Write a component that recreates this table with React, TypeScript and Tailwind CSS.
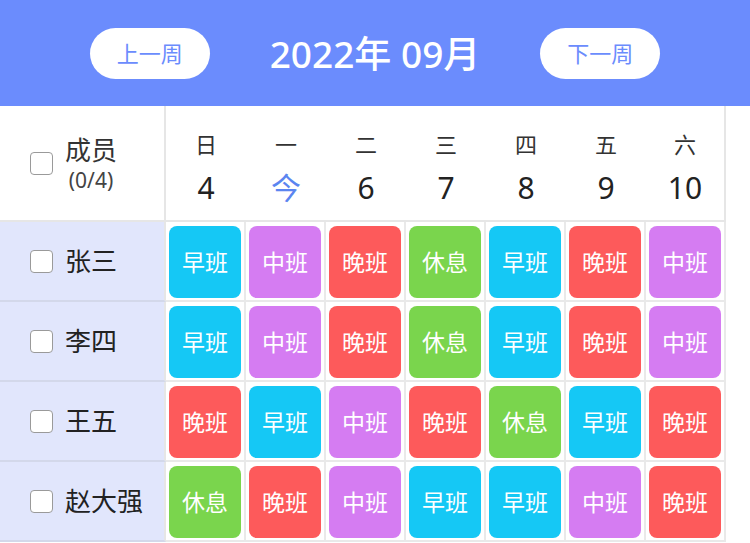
import React from "react";

const COLORS: Record<string, string> = {
  早班: "bg-[#15c8f5]",
  中班: "bg-[#d57cf2]",
  晚班: "bg-[#fd5a5b]",
  休息: "bg-[#7ad54d]",
};

const days = [
  { w: "日", d: "4" },
  { w: "一", d: "今", today: true },
  { w: "二", d: "6" },
  { w: "三", d: "7" },
  { w: "四", d: "8" },
  { w: "五", d: "9" },
  { w: "六", d: "10" },
];

const rows = [
  { name: "张三", shifts: ["早班", "中班", "晚班", "休息", "早班", "晚班", "中班"] },
  { name: "李四", shifts: ["早班", "中班", "晚班", "休息", "早班", "晚班", "中班"] },
  { name: "王五", shifts: ["晚班", "早班", "中班", "晚班", "休息", "早班", "晚班"] },
  { name: "赵大强", shifts: ["休息", "晚班", "中班", "早班", "早班", "中班", "晚班"] },
];

function Box() {
  return <span className="block w-[23px] h-[23px] rounded-[4px] border-[1.5px] border-[#9a9a9a] bg-white shrink-0" />;
}

export default function App() {
  const font = { fontFamily: '"Noto Sans", "Noto Sans CJK SC", sans-serif' };
  return (
    <div className="w-[750px] h-[543px] overflow-hidden bg-white" style={font}>
      <div className="h-[106px] bg-[#6b8cfd] flex items-center justify-center gap-[60px]">
        <button className="w-[120px] h-[51px] rounded-full bg-white text-[#6b8cfd] text-[22px] leading-none">上一周</button>
        <div className="text-white text-[37px] leading-none whitespace-pre font-medium">2022年 09月</div>
        <button className="w-[120px] h-[51px] rounded-full bg-white text-[#6b8cfd] text-[22px] leading-none">下一周</button>
      </div>
      <div className="grid grid-cols-[166px_repeat(7,80px)] w-[726px]">
        <div className="h-[116px] border-r-2 border-b-2 border-[#e6e6e6] flex items-center pl-[30px] gap-[12px]">
          <Box />
          <div className="flex flex-col items-center text-[#333] gap-[2px] pt-[2px]">
            <span className="text-[26px] leading-[30px]">成员</span>
            <span className="text-[21px] leading-[26px] text-[#444]">(0/4)</span>
          </div>
        </div>
        {days.map((d, i) => (
          <div key={i} className={`h-[116px] border-b-2 border-[#e6e6e6] ${i === 6 ? "border-r-2" : ""} flex flex-col items-center pt-[24px]`}>
            <span className="text-[22px] leading-[28px] text-[#333]">{d.w}</span>
            <span className={`mt-[14px] text-[30px] leading-[32px] ${d.today ? "text-[#5b85f0]" : "text-[#222]"}`}>{d.d}</span>
          </div>
        ))}
        {rows.map((r) => (
          <React.Fragment key={r.name}>
            <div className="h-[80px] bg-[#e1e6fc] border-r-2 border-r-[#e6e6e6] border-b-2 border-b-[#d3d8ea] flex items-center pl-[30px] gap-[12px]">
              <Box />
              <span className="text-[26px] text-[#222]">{r.name}</span>
            </div>
            {r.shifts.map((s, j) => (
              <div key={j} className="h-[80px] border-b-2 border-r-2 border-[#e9e9e9] p-[3px] pt-[4px]">
                <div className={`w-full h-[72px] rounded-[8px] ${COLORS[s]} flex items-center justify-center text-white text-[23px]`}>{s}</div>
              </div>
            ))}
          </React.Fragment>
        ))}
      </div>
    </div>
  );
}
